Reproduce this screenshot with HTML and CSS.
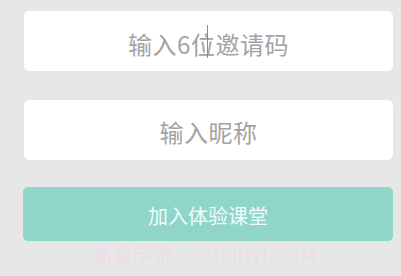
FILE: index.html
```html
<!DOCTYPE html>
<html lang="zh-CN">
<head>
<meta charset="utf-8">
<link rel="stylesheet" href="styles.css">
</head>
<body>
<div class="page">
  <div class="field field-code">
    <span class="placeholder">输入6位邀请码</span>
    <span class="caret"></span>
  </div>
  <div class="field field-name">
    <span class="placeholder">输入昵称</span>
  </div>
  <div class="join-btn">加入体验课堂</div>
  <div class="watermark">新意手游 • SIXINYI.COM</div>
</div>
</body>
</html>
```
FILE: styles.css
```css
html, body {
  margin: 0;
  padding: 0;
  background: #e7e7e7;
}
body {
  width: 401px;
  height: 276px;
  overflow: hidden;
  font-family: "Noto Sans CJK SC", "Noto Sans", sans-serif;
}
.page {
  display: flex;
  flex-direction: column;
  padding: 11px 8px 0 24px;
}
.field {
  position: relative;
  height: 60px;
  background: #ffffff;
  border-radius: 5px;
  box-shadow: 0 0 1px rgba(0, 0, 0, 0.06);
  display: flex;
  align-items: center;
  justify-content: center;
  box-sizing: border-box;
}
.field-code {
  padding-top: 6px;
}
.field-name {
  margin-top: 29px;
  padding-top: 3px;
}
.placeholder {
  color: #a3a3a3;
  font-size: 24px;
  line-height: 1;
  letter-spacing: 0.5px;
}
.caret {
  position: absolute;
  left: 183px;
  top: 14px;
  width: 1px;
  height: 33px;
  background: #8c8c8c;
}
.join-btn {
  margin-top: 27px;
  height: 54px;
  margin-left: -1px;
  background: #8fd5c9;
  border-radius: 5px;
  color: #f2fbf9;
  font-size: 20px;
  display: flex;
  align-items: center;
  justify-content: center;
  padding-top: 2px;
  box-sizing: border-box;
}
.watermark {
  margin-top: 2px;
  text-align: center;
  color: #ecdde7;
  font-size: 19px;
  line-height: 24px;
  letter-spacing: 0.6px;
  padding-right: 6px;
}
```
